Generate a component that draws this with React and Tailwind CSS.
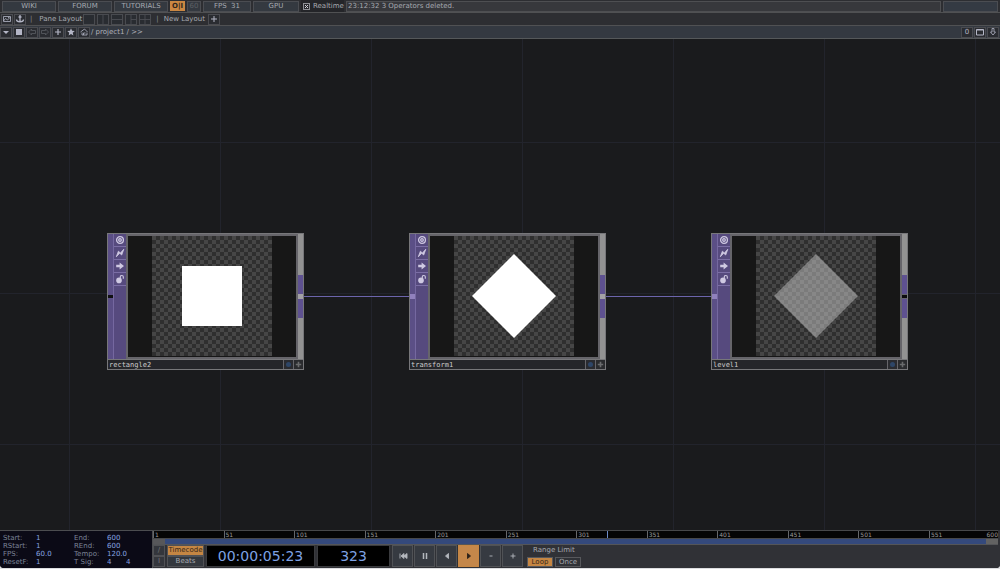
import React, { useState } from 'react';

const FIRST_FRAME = 1;
const LAST_FRAME = 600;

const nodes = [
  { id: 'rectangle2', place: 'left-[107px]', shape: 'square', input: false, output: true },
  { id: 'transform1', place: 'left-[409px]', shape: 'diamond', input: true, output: true },
  { id: 'level1', place: 'left-[711px]', shape: 'faded', input: true, output: false },
];

const marks = [1, 51, 101, 151, 201, 251, 301, 351, 401, 451, 501, 551];

const timeFields = [
  { label: 'Start:', value: '1' },
  { label: 'End:', value: '600' },
  { label: 'RStart:', value: '1' },
  { label: 'REnd:', value: '600' },
  { label: 'FPS:', value: '60.0' },
  { label: 'Tempo:', value: '120.0' },
  { label: 'ResetF:', value: '1' },
  { label: 'T Sig:', value: '4', second: '4' },
];

const framePercent = (frame) => ((frame - FIRST_FRAME) / (LAST_FRAME - FIRST_FRAME)) * 100;

const Icon = ({ children, size = 'w-[10px] h-[10px]' }) => (
  <svg viewBox="0 0 10 10" className={`${size} shrink-0`} fill="none" stroke="currentColor" aria-hidden="true">
    {children}
  </svg>
);

const TopButton = ({ children, width = 'w-[54px]', tone = 'text-[#a6a9b0]' }) => (
  <button type="button" className={`h-[11px] flex items-center justify-center border border-[#4b4d52] bg-[#343940] whitespace-pre shrink-0 ${width} ${tone}`}>
    {children}
  </button>
);

const SmallButton = ({ label, children, tone = 'text-[#b4b6c6]' }) => (
  <button type="button" aria-label={label} className={`w-[12px] h-[11px] flex items-center justify-center border border-[#4a4b50] bg-[#2a2c31] shrink-0 ${tone}`}>
    {children}
  </button>
);

const MenuBar = () => {
  const [realtime, setRealtime] = useState(true);

  return (
    <div className="h-[13px] flex items-center gap-[2px] px-[2px] bg-[#2d2e32] border-b border-[#505153]">
      <TopButton>WIKI</TopButton>
      <TopButton>FORUM</TopButton>
      <TopButton>TUTORIALS</TopButton>
      <button type="button" className="w-[15px] h-[10px] flex items-center justify-center bg-[#cb8742] text-[#30251c] font-bold shrink-0">O|I</button>
      <TopButton width="w-[14px]" tone="text-[#5d6065]">60</TopButton>
      <TopButton width="w-[48px]">FPS  31</TopButton>
      <TopButton width="w-[46px]">GPU</TopButton>
      <label className="flex items-center gap-[3px] w-[43px] pl-[2px] h-full bg-[#242529] text-[#a6a9b0] shrink-0">
        <span className="relative w-[7px] h-[7px] shrink-0">
          <input
            type="checkbox"
            checked={realtime}
            onChange={(e) => setRealtime(e.target.checked)}
            className="block appearance-none w-[7px] h-[7px] border border-[#8d8f94] bg-[#292a2f]"
          />
          {realtime && (
            <svg viewBox="0 0 7 7" className="absolute inset-0 w-[7px] h-[7px] pointer-events-none" stroke="#d5d6db" aria-hidden="true">
              <path d="M2 2L5 5M5 2L2 5" />
            </svg>
          )}
        </span>
        Realtime
      </label>
      <div className="flex-1 h-[11px] flex items-center px-px border border-[#4e4f52] bg-[#37383c] text-[#a6a9b0] whitespace-nowrap">
        23:12:32 3 Operators deleted.
      </div>
      <div className="w-[55px] h-[11px] border border-[#4b4d52] bg-[#343a43] shrink-0"></div>
    </div>
  );
};

const LayoutBar = () => (
  <div className="h-[13px] flex items-center pl-px bg-[#2d2e32] border-b border-[#505153] text-[#a6a9b0]">
    <div className="flex gap-px">
      <SmallButton label="Open network">
        <Icon><path d="M1.5 2.5h7v5h-7zM1.5 7l2-2.5 2 1.5 3-3M6 3.5h1" strokeWidth="0.8" /></Icon>
      </SmallButton>
      <SmallButton label="Anchor">
        <Icon><path d="M5 1v7M3.5 3h3M1.5 5.5c0 3 7 3 7 0" strokeWidth="1.3" /></Icon>
      </SmallButton>
    </div>
    <span className="px-[4px] text-[#85878b]">|</span>
    <span className="pl-[3px] pr-px whitespace-nowrap">Pane Layout</span>
    <div className="flex gap-[2px] text-[#4c4e53]">
      {['', 'M6 0v9', 'M0 4.5h12', 'M6 0v9M6 4.5h6', 'M6 0v9M0 4.5h12'].map((d, i) => (
        <button key={i} type="button" aria-label={`Pane layout ${i + 1}`} className="w-[12px] h-[11px] border border-[#494b50] bg-[#292c31] shrink-0">
          <svg viewBox="0 0 12 9" className="w-full h-full" preserveAspectRatio="none" stroke="currentColor" fill="none" aria-hidden="true">
            <path d={d} />
          </svg>
        </button>
      ))}
    </div>
    <span className="px-[5px] text-[#85878b]">|</span>
    <span className="pr-[3px] whitespace-nowrap">New Layout</span>
    <SmallButton label="Add layout">
      <Icon><path d="M5 2v6M2 5h6" /></Icon>
    </SmallButton>
  </div>
);

const PathBar = () => (
  <div className="h-[13px] flex items-center justify-between pr-px bg-[#343941] border-b border-[#55585a] text-[#b0b2ba]">
    <div className="flex items-center gap-px">
      <SmallButton label="Pane type"><Icon><path d="M2 4h6l-3 3z" fill="currentColor" stroke="none" /></Icon></SmallButton>
      <SmallButton label="Stop"><Icon><path d="M2 2h6v6h-6z" fill="currentColor" stroke="none" /></Icon></SmallButton>
      <SmallButton label="Back" tone="text-[#5a5d63]"><Icon><path d="M1.5 5l3-3v1.5h4v3h-4v1.5z" strokeWidth="0.8" /></Icon></SmallButton>
      <SmallButton label="Forward" tone="text-[#5a5d63]"><Icon><path d="M8.5 5l-3-3v1.5h-4v3h4v1.5z" strokeWidth="0.8" /></Icon></SmallButton>
      <SmallButton label="Add"><Icon><path d="M5 2v6M2 5h6" strokeWidth="1.2" /></Icon></SmallButton>
      <SmallButton label="Bookmark"><Icon><path d="M5 1.2l1.1 2.6 2.7.2-2.1 1.7.7 2.7L5 7 2.6 8.4l.7-2.7L1.2 4l2.7-.2z" fill="currentColor" stroke="none" /></Icon></SmallButton>
      <SmallButton label="Home"><Icon><path d="M1.5 5L5.5 2l3 3M3 5.5v2.5h5V5.5M4.5 8V6h2" strokeWidth="0.8" /></Icon></SmallButton>
      <nav className="whitespace-nowrap">
        <a href="#root">/</a> <a href="#project1">project1</a> / &gt;&gt;
      </nav>
    </div>
    <div className="flex gap-px">
      <SmallButton>0</SmallButton>
      <SmallButton label="Maximize pane"><Icon><path d="M1.5 2.5h7v5.5h-7zM1.5 3h7" /></Icon></SmallButton>
      <SmallButton label="Pin pane"><Icon><path d="M4 1.5h2v3.5h1.5L5 8 2.5 5H4z" strokeWidth="0.8" /></Icon></SmallButton>
    </div>
  </div>
);

const flagIcons = [
  {
    label: 'Viewer active',
    art: (
      <>
        <circle cx="5" cy="5" r="3.4" strokeWidth="1.3" />
        <circle cx="5" cy="5" r="1.3" strokeWidth="1.3" />
      </>
    ),
  },
  { label: 'Bypass', art: <path d="M1.3 8.8L3.4 3.2 5.4 5 8.8 1.2 6.7 7 4.700 5.200z" fill="currentColor" strokeWidth="0.8" /> },
  { label: 'Clone', art: <path d="M1.2 3.8h3.4V1.4L9 5 4.6 8.6V6.2H1.2z" fill="currentColor" stroke="none" /> },
  {
    label: 'Lock',
    art: (
      <>
        <circle cx="4" cy="6.4" r="2.8" fill="currentColor" stroke="none" />
        <path d="M5.3 4.5V2.8c0-1.8 3-1.8 3 0v1.9" strokeWidth="1.1" />
      </>
    ),
  },
];

const Preview = ({ shape }) => (
  <svg viewBox="0 0 120 120" className="w-[120px] h-[120px] shrink-0 bg-[#2f2f2f]" aria-label={shape}>
    <defs>
      <pattern id={`checker-${shape}`} width="8" height="8" patternUnits="userSpaceOnUse">
        <path d="M0 0h4v4h-4zM4 4h4v4h-4z" fill="#464646" />
      </pattern>
    </defs>
    <rect width="120" height="120" fill={`url(#checker-${shape})`} />
    {shape === 'square' && <rect x="30" y="30" width="60" height="60" fill="#fff" />}
    {shape === 'diamond' && <path d="M60 18l42 42-42 42-42-42z" fill="#fff" />}
    {shape === 'faded' && <path d="M60 18l42 42-42 42-42-42z" fill="#c8c8c8" fillOpacity="0.5" />}
  </svg>
);

const OperatorNode = ({ node }) => (
  <div className={`absolute top-[194px] ${node.place} w-[197px] border border-[#77777a] bg-[#66656a]`}>
    <div className="flex h-[125px]">
      {/* Input side */}
      <div className="w-[5px] flex items-center bg-[#5b4f86]">
        <span className={node.input ? 'w-[5px] h-[5px] bg-[#9081bd]' : 'w-[5px] h-[3px] bg-[#101012]'}></span>
      </div>
      <div className="w-[13px] flex flex-col border-l border-[#7568a0] bg-[#564a7e] text-[#cfc9e2]">
        {flagIcons.map((flag) => (
          <button key={flag.label} type="button" aria-label={flag.label} className="h-[13px] flex items-center justify-center border-b border-[#7b6ea5]">
            <Icon>{flag.art}</Icon>
          </button>
        ))}
      </div>
      <div className="flex-1 border-2 border-[#66656a] bg-[#171717] flex justify-center items-start">
        <Preview shape={node.shape} />
      </div>
      {/* Output side */}
      <div className="w-[5px] flex flex-col justify-center bg-[#929292]">
        <span className="h-[19px] bg-[#5e5190]"></span>
        <span className={node.output ? 'h-[5px] bg-[#a3a1a5]' : 'h-[5px] border-y border-[#66656a] bg-[#0c0c0d]'}></span>
        <span className="h-[19px] bg-[#5e5190]"></span>
      </div>
    </div>
    {/* Name bar */}
    <div className="flex h-[10px] gap-px border-t border-[#77777a]">
      <span className="flex-1 bg-[#25262a] px-px leading-[10px] font-['DejaVu_Sans_Mono',monospace] text-[#cdcdcd]">{node.id}</span>
      <button type="button" aria-label="Toggle display" className="w-[9px] flex items-center justify-center bg-[#2a2b30]">
        <span className="w-[5px] h-[5px] rounded-full bg-[#2e4668]"></span>
      </button>
      <button type="button" aria-label="Activate viewer" className="w-[9px] flex items-center justify-center bg-[#2a2b2e] text-[#6a6b6d]">
        <Icon size="w-[9px] h-[9px]"><path d="M5 2v6M2 5h6" strokeWidth="1.8" /></Icon>
      </button>
    </div>
  </div>
);

const Network = () => (
  <main className="relative flex-1 min-h-[400px] overflow-hidden bg-[#1a1b1d] bg-[linear-gradient(to_right,#22242c_1px,transparent_1px),linear-gradient(to_bottom,#22242c_1px,transparent_1px)] bg-[size:151px_151px] bg-[position:69px_103px]">
    <svg className="absolute inset-0 w-full h-full" aria-hidden="true">
      <path d="M304 257.5H410M606 257.5H712" stroke="#6c65ac" fill="none" />
    </svg>
    {nodes.map((node) => (
      <OperatorNode key={node.id} node={node} />
    ))}
  </main>
);

const TimeSettings = () => (
  <form className="w-[153px] shrink-0 grid grid-cols-[69px_1fr] content-start gap-x-[2px] pl-[3px] pt-[3px] bg-[#0b0a16] border-t border-r border-[#4c4d50]">
    {timeFields.map((field) => (
      <label key={field.label} className="flex h-[8px] items-center text-[#7b8496]">
        <span className="w-[33px] shrink-0">{field.label}</span>
        <input defaultValue={field.value} className={`h-[8px] min-w-0 p-0 bg-transparent text-[#86a4e2] outline-none ${field.second ? 'w-[19px]' : 'w-[30px]'}`} />
        {field.second && (
          <input aria-label="Beat unit" defaultValue={field.second} className="h-[8px] w-[14px] p-0 bg-transparent text-[#86a4e2] outline-none" />
        )}
      </label>
    ))}
  </form>
);

const Timeline = ({ frame }) => (
  <div className="bg-[#303136]">
    <div className="relative h-[9px] mr-[2px] bg-[#050505] border-y border-[#47484a] text-[6px] leading-[8px] text-[#9a9a9a]">
      {marks.map((mark) => (
        <span key={mark} className="absolute top-0 h-full border-l border-[#66676a] pl-px" style={{ left: `${framePercent(mark)}%` }}>
          {mark}
        </span>
      ))}
      <span className="absolute top-0 right-0">600</span>
      <span className="absolute top-0 h-full w-px bg-[#6f8cc9]" style={{ left: `${framePercent(frame)}%` }}></span>
    </div>
    <div className="flex h-[6px] mr-[2px] border-b border-[#545558]">
      <span className="w-[12px] bg-[#57575a]"></span>
      <span className="flex-1 bg-[#34497c]"></span>
      <span className="w-[12px] bg-[#626262]"></span>
    </div>
  </div>
);

const transport = [
  { label: 'Jump to start', path: 'M2 2.5v5M6 2.5L3 5l3 2.5zM9 2.5L6 5l3 2.5z' },
  { label: 'Pause', path: 'M3.5 2v6M6.5 2v6', bold: true },
  { label: 'Play reverse', path: 'M6.5 2.5v5L3.5 5z' },
  { label: 'Play', path: 'M3.5 2.5v5L6.5 5z' },
  { label: 'Step back', path: 'M3.5 5h3' },
  { label: 'Step forward', path: 'M5 2.5v5M2.5 5h5' },
];

const Transport = ({ frame }) => {
  const [active, setActive] = useState('Play');
  const [mode, setMode] = useState('Timecode');
  const [range, setRange] = useState('Loop');

  return (
    <div className="flex-1 flex items-start gap-[2px] bg-[#303136]">
      <div className="flex flex-col w-[12px] shrink-0 text-[#74767b]">
        <button type="button" aria-label="Toggle slash" className="h-[11px] flex items-center justify-center border border-[#505155] bg-[#34363c]">/</button>
        <button type="button" aria-label="Toggle index" className="h-[11px] flex items-center justify-center border border-[#505155] bg-[#34363c]">I</button>
      </div>
      <div className="flex flex-col w-[37px] shrink-0">
        {['Timecode', 'Beats'].map((name) => (
          <button
            key={name}
            type="button"
            onClick={() => setMode(name)}
            className={`h-[11px] flex items-center justify-center border border-[#505155] ${mode === name ? 'bg-[#c58643] text-[#352719]' : 'bg-[#34383e] text-[#a6a9b0]'}`}
          >
            {name}
          </button>
        ))}
      </div>
      <output className="w-[109px] h-[22px] flex items-center justify-center border border-[#3a3b3e] bg-black text-[14px] text-[#7ea2e4] shrink-0">00:00:05:23</output>
      <output className="w-[73px] h-[22px] flex items-center justify-center border border-[#3a3b3e] bg-black text-[14px] text-[#7ea2e4] shrink-0">{frame}</output>
      <div className="flex gap-px">
        {transport.map((item) => (
          <button
            key={item.label}
            type="button"
            aria-label={item.label}
            onClick={() => setActive(item.label)}
            className={`w-[21px] h-[22px] flex items-center justify-center border ${active === item.label ? 'border-[#c58643] bg-[#c4874a] text-[#2b2119]' : 'border-[#505256] bg-[#363a41] text-[#b4b8be]'}`}
          >
            <Icon><path d={item.path} fill="currentColor" strokeWidth={item.bold ? '1.5' : '0.9'} /></Icon>
          </button>
        ))}
      </div>
      <div className="flex flex-col h-[22px] pl-[2px] shrink-0 text-[#a6a9b0]">
        <span className="h-[12px] pl-[6px] leading-[10px] whitespace-nowrap">Range Limit</span>
        <div className="flex gap-[2px]">
          {['Loop', 'Once'].map((name) => (
            <button
              key={name}
              type="button"
              onClick={() => setRange(name)}
              className={`w-[26px] h-[10px] flex items-center justify-center border border-[#57585c] ${range === name ? 'bg-[#c58643] text-[#352719]' : 'bg-[#303237] text-[#a6a9b0]'}`}
            >
              {name}
            </button>
          ))}
        </div>
      </div>
    </div>
  );
};

const App = () => {
  const frame = 323;

  return (
    <div className="min-h-screen flex flex-col bg-[#dcdde0] pb-px font-['DejaVu_Sans',sans-serif] text-[7px] leading-[9px]">
      <div className="flex-1 flex flex-col rounded-b overflow-hidden bg-[#1a1b1d]">
        <MenuBar />
        <LayoutBar />
        <PathBar />
        <Network />
        <footer className="flex h-[38px]">
          <TimeSettings />
          <div className="flex-1 min-w-0 flex flex-col">
            <Timeline frame={frame} />
            <Transport frame={frame} />
          </div>
        </footer>
      </div>
    </div>
  );
};

export default App;
